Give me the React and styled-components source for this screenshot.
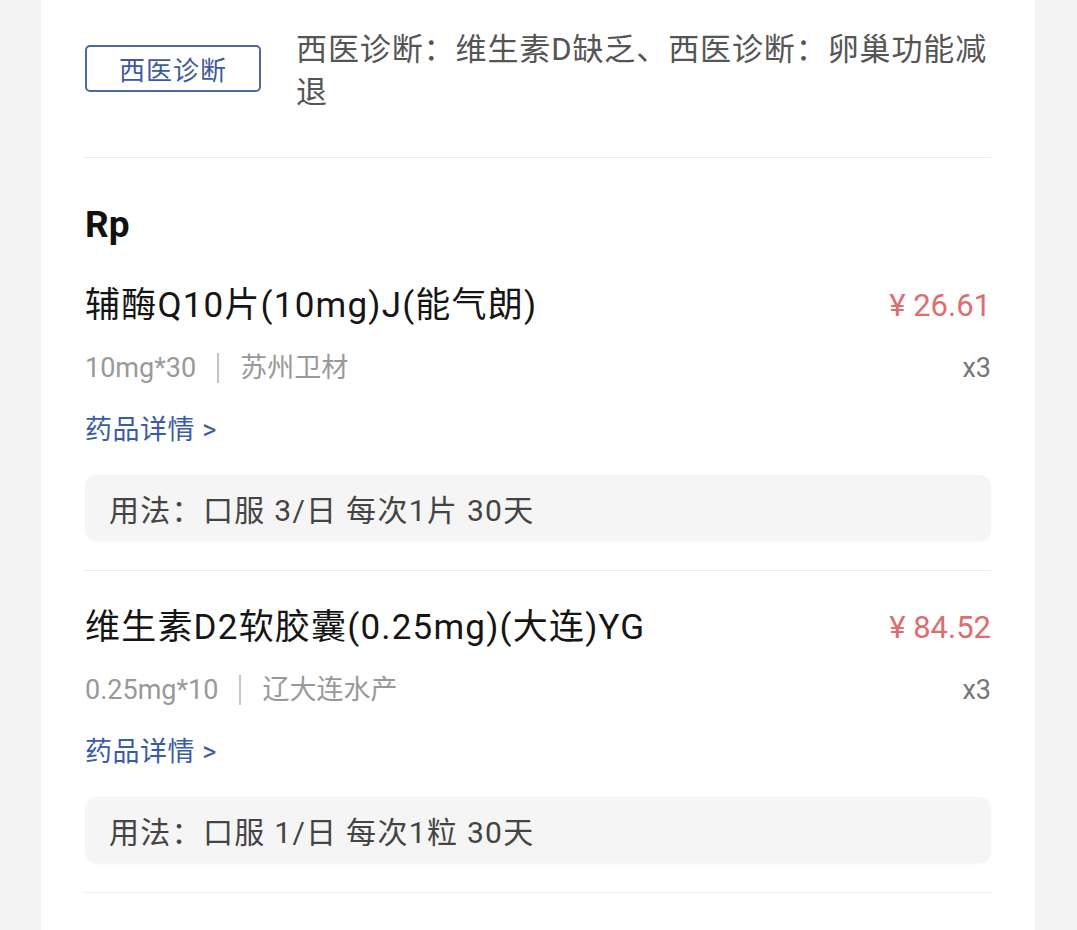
import React from 'react';
import styled, { createGlobalStyle } from 'styled-components';

const GlobalStyle = createGlobalStyle`
  body {
    margin: 0;
    background: #f4f4f4;
    font-family: Roboto, "Noto Sans CJK SC", sans-serif;
  }
`;

const Page = styled.div`
  padding: 0 42px 0 41px;
  min-height: 930px;
`;

const Card = styled.div`
  background: #fff;
  padding: 28px 44px 80px;
  min-height: 930px;
  box-sizing: border-box;
`;

const DiagnosisRow = styled.div`
  display: flex;
  align-items: flex-start;
  gap: 35px;
  padding-bottom: 43px;
  border-bottom: 1px solid #ebebeb;
`;

const Tag = styled.div`
  flex: none;
  width: 176px;
  height: 47px;
  margin-top: 17px;
  box-sizing: border-box;
  border: 2px solid #4d6a9f;
  border-radius: 5px;
  display: flex;
  align-items: center;
  justify-content: center;
  color: #3d5a9c;
  font-size: 26px;
  letter-spacing: 1px;
`;

const DiagnosisText = styled.div`
  flex: 1;
  font-size: 31px;
  letter-spacing: 0.9px;
  line-height: 43px;
  color: #555;
`;

const SectionTitle = styled.h2`
  margin: 43px 0 0;
  font-size: 37px;
  line-height: 48px;
  font-weight: 700;
  color: #111;
`;

const Item = styled.div`
  padding: 35px 0 29px;
  border-bottom: 1px solid #ebebeb;
`;

const Row = styled.div`
  display: flex;
  align-items: center;
  justify-content: space-between;
  margin-top: ${(p) => p.$gap || 0}px;
`;

const Name = styled.div`
  font-size: 35px;
  letter-spacing: 1.2px;
  line-height: 44px;
  color: #151515;
`;

const Price = styled.div`
  font-size: 31px;
  line-height: 44px;
  color: #dc6e70;
`;

const Spec = styled.div`
  display: flex;
  align-items: center;
  font-size: 27px;
  line-height: 36px;
  color: #999;
`;

const Divider = styled.span`
  width: 2px;
  height: 30px;
  background: #c4c4c4;
  margin: 0 21px;
`;

const Qty = styled.div`
  font-size: 27px;
  line-height: 36px;
  color: #777;
`;

const DetailLink = styled.a`
  display: block;
  margin-top: 26px;
  font-size: 27px;
  letter-spacing: 0.5px;
  line-height: 36px;
  color: #3a5ca8;
  text-decoration: none;
`;

const Usage = styled.div`
  margin-top: 27px;
  height: 66px;
  display: flex;
  align-items: center;
  padding: 0 24px;
  background: #f5f5f5;
  border-radius: 12px;
  box-shadow: 0 1px 3px rgba(0, 0, 0, 0.04);
  font-size: 30px;
  letter-spacing: 1.3px;
  color: #444;
`;

const drugs = [
  {
    name: '辅酶Q10片(10mg)J(能气朗)',
    price: '26.61',
    spec: '10mg*30',
    maker: '苏州卫材',
    qty: 'x3',
    usage: '用法：口服 3/日 每次1片 30天',
  },
  {
    name: '维生素D2软胶囊(0.25mg)(大连)YG',
    price: '84.52',
    spec: '0.25mg*10',
    maker: '辽大连水产',
    qty: 'x3',
    usage: '用法：口服 1/日 每次1粒 30天',
  },
];

export default function App() {
  return (
    <Page>
      <GlobalStyle />
      <Card>
        <DiagnosisRow>
          <Tag>西医诊断</Tag>
          <DiagnosisText>西医诊断：维生素D缺乏、西医诊断：卵巢功能减退</DiagnosisText>
        </DiagnosisRow>

        <SectionTitle>Rp</SectionTitle>

        {drugs.map((d) => (
          <Item key={d.name}>
            <Row>
              <Name>{d.name}</Name>
              <Price>¥ {d.price}</Price>
            </Row>
            <Row $gap={22}>
              <Spec>
                {d.spec}
                <Divider />
                {d.maker}
              </Spec>
              <Qty>{d.qty}</Qty>
            </Row>
            <DetailLink>药品详情 &gt;</DetailLink>
            <Usage>{d.usage}</Usage>
          </Item>
        ))}
      </Card>
    </Page>
  );
}
